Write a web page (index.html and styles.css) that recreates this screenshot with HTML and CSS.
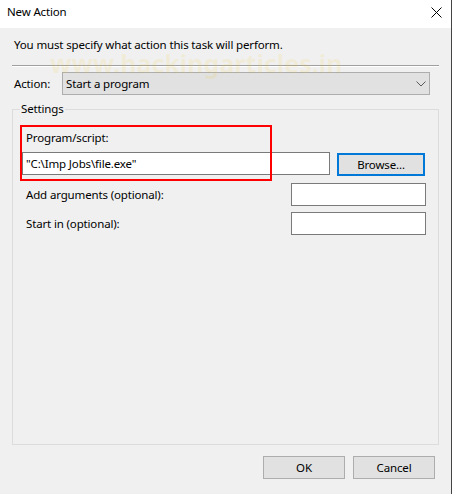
FILE: index.html
```html
<!DOCTYPE html>
<html>
<head>
<meta charset="utf-8">
<title>New Action</title>
<link rel="stylesheet" href="styles.css">
</head>
<body>
<div class="window">
  <div class="titlebar">
    <span class="title">New Action</span>
    <svg class="close" width="11" height="11" viewBox="0 0 11 11"><path d="M0.5 0.5 L10.5 10.5 M10.5 0.5 L0.5 10.5" stroke="#000" stroke-width="1" fill="none"/></svg>
  </div>
  <div class="content">
    <p class="msg">You must specify what action this task will perform.</p>
    <div class="sep"></div>
    <div class="action-row">
      <span class="action-label">Action:</span>
      <div class="combo">
        <span class="combo-text">Start a program</span>
        <svg class="chev" width="10" height="6" viewBox="0 0 10 6"><path d="M0.5 0.5 L5 5 L9.5 0.5" stroke="#5a5a5a" stroke-width="1" fill="none"/></svg>
      </div>
    </div>
    <fieldset class="group">
      <legend class="legend">Settings</legend>
      <div class="field-label">Program/script:</div>
      <div class="prog-row">
        <div class="input wide">"C:\Imp Jobs\file.exe"</div>
        <button class="btn browse">Browse...</button>
      </div>
      <div class="opt-row first">
        <span class="opt-label">Add arguments (optional):</span>
        <div class="input short"></div>
      </div>
      <div class="opt-row second">
        <span class="opt-label">Start in (optional):</span>
        <div class="input short"></div>
      </div>
    </fieldset>
    <div class="footer">
      <button class="btn dlg">OK</button>
      <button class="btn dlg">Cancel</button>
    </div>
  </div>
  <div class="watermark" aria-hidden="true">www.hackingarticles.in</div>
  <div class="highlight"></div>
</div>
</body>
</html>
```

FILE: styles.css
```css
* { box-sizing: border-box; }
html, body { margin: 0; padding: 0; background: #f0f0f0; }
body {
  font-family: "Noto Sans", "Open Sans", sans-serif;
  font-size: 11.5px;
  letter-spacing: -0.15px;
  line-height: 16px;
  color: #000;
}
.window {
  position: relative;
  width: 452px;
  height: 494px;
  border-right: 1px solid #444;
  overflow: hidden;
}
.titlebar {
  height: 28px;
  background: #fff;
  display: flex;
  align-items: flex-start;
  padding: 4px 0 0 7px;
}
.title { line-height: 16px; }
.close { margin-left: auto; margin-right: 9px; margin-top: 3px; }
.content {
  height: 466px;
  background: #f0f0f0;
  padding-top: 9px;
}
.msg { margin: 0; padding-left: 14px; }
.sep {
  margin: 12px 0 0 12px;
  width: 427px;
  border-top: 1px solid #a0a0a0;
  border-bottom: 1px solid #fff;
}
.action-row {
  display: flex;
  align-items: center;
  margin-top: 5px;
  padding-left: 14px;
}
.action-label { width: 48px; }
.combo {
  width: 368px;
  height: 23px;
  border: 1px solid #adadad;
  background: #e1e1e1;
  display: flex;
  align-items: center;
  padding: 0 3px 0 3px;
}
.combo-text { flex: 1; }
.chev { display: block; }
.group {
  margin: 6px 0 0 12px;
  padding: 0;
  width: 427px;
  height: 344px;
  border: 1px solid #dcdcdc;
  min-width: 0;
}
.legend {
  margin-left: 7px;
  padding: 0 1px;
  line-height: 16px;
}
.field-label { margin-top: 13px; padding-left: 13px; }
.prog-row {
  display: flex;
  align-items: flex-start;
  margin-top: 6px;
  padding-left: 9px;
}
.input {
  height: 23px;
  border: 1px solid #7a7a7a;
  background: #fff;
  padding-left: 3px;
  line-height: 21px;
  white-space: nowrap;
}
.wide { width: 308px; }
.short { width: 135px; margin-left: auto; }
.btn {
  font-family: inherit;
  font-size: 11.5px;
  letter-spacing: -0.15px;
  color: #000;
  background: #e1e1e1;
  border: 1px solid #adadad;
  height: 23px;
  padding: 0;
  margin: 0;
}
.browse {
  width: 88px;
  margin-left: 7px;
  margin-top: 1px;
  border: 2px solid #0078d7;
}
.opt-row {
  display: flex;
  align-items: center;
  padding: 0 12px 0 13px;
}
.opt-row.first { margin-top: 7px; }
.opt-row.second { margin-top: 6px; }
.footer {
  display: flex;
  justify-content: flex-end;
  gap: 8px;
  margin-top: 11px;
  padding-right: 16px;
}
.dlg { width: 82px; }
.watermark {
  position: absolute;
  left: 50px;
  top: 51px;
  font-size: 25px;
  line-height: 25px;
  letter-spacing: 0;
  font-weight: bold;
  color: rgba(240, 200, 40, 0.12);
  pointer-events: none;
  white-space: nowrap;
}
.highlight {
  position: absolute;
  left: 20px;
  top: 125px;
  width: 252px;
  height: 56px;
  border: 2px solid #ff0000;
  pointer-events: none;
}
```
